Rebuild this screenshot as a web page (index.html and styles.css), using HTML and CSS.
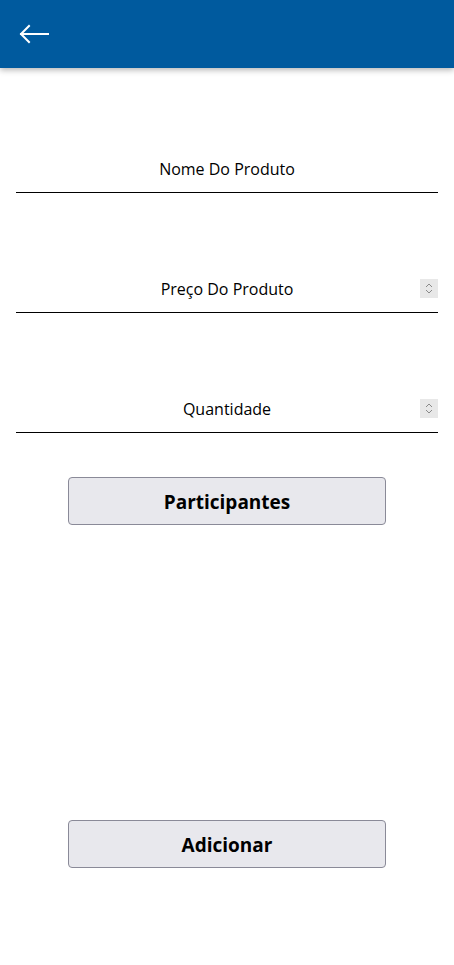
FILE: index.html
```html
<!DOCTYPE html>
<html lang="pt">
<head>
<meta charset="utf-8">
<link rel="stylesheet" href="styles.css">
</head>
<body>
<header class="topbar">
  <svg class="back" width="30" height="20" viewBox="0 0 30 20">
    <path d="M2 10 H29 M10 2 L2 10 L10 18" fill="none" stroke="#fff" stroke-width="2" stroke-linecap="square" stroke-linejoin="miter"/>
  </svg>
</header>
<main class="form">
  <div class="field first">
    <span class="pad"></span>
    <span class="label">Nome Do Produto</span>
    <span class="pad"></span>
  </div>
  <div class="field">
    <span class="pad"></span>
    <span class="label">Preço Do Produto</span>
    <span class="spin">
      <svg width="18" height="19" viewBox="0 0 18 19"><path d="M6 8 L9 5 L12 8 M6 11 L9 14 L12 11" fill="none" stroke="#8a8a8a" stroke-width="1"/></svg>
    </span>
  </div>
  <div class="field">
    <span class="pad"></span>
    <span class="label">Quantidade</span>
    <span class="spin">
      <svg width="18" height="19" viewBox="0 0 18 19"><path d="M6 8 L9 5 L12 8 M6 11 L9 14 L12 11" fill="none" stroke="#8a8a8a" stroke-width="1"/></svg>
    </span>
  </div>
  <button class="btn btn-part">Participantes</button>
  <button class="btn btn-add">Adicionar</button>
</main>
</body>
</html>
```
FILE: styles.css
```css
* { box-sizing: border-box; }
html, body { margin: 0; padding: 0; background: #fff; }
body { font-family: "Open Sans", "Noto Sans", sans-serif; color: #000; width: 454px; height: 965px; overflow: hidden; }
.topbar {
  height: 68px;
  background: #005a9e;
  display: flex;
  align-items: center;
  padding-left: 19px;
  box-shadow: 0 2px 6px rgba(0,0,0,0.3);
  position: relative;
  z-index: 1;
}
.back { display: block; margin-top: 0; }
.form {
  display: flex;
  flex-direction: column;
  align-items: center;
  padding: 0 16px;
}
.field {
  width: 100%;
  height: 41px;
  margin-top: 79px;
  border-bottom: 1px solid #000;
  display: grid;
  grid-template-columns: 18px 1fr 18px;
  align-items: center;
  padding-bottom: 7px;
}
.field.first { margin-top: 84px; }
.label {
  text-align: center;
  font-size: 16px;
  line-height: 22px;
}
.spin {
  width: 18px;
  height: 19px;
  background: #e8e8e8;
  display: block;
}
.spin svg { display: block; }
.btn {
  width: 318px;
  height: 48px;
  border: 1px solid #8a8a98;
  border-radius: 4px;
  background: #e8e8ed;
  font-family: "Open Sans", "Noto Sans", sans-serif;
  font-weight: 700;
  font-size: 19px;
  color: #000;
  padding: 2px 0 0;
}
.btn-part { margin-top: 44px; }
.btn-add { margin-top: 295px; }
```
